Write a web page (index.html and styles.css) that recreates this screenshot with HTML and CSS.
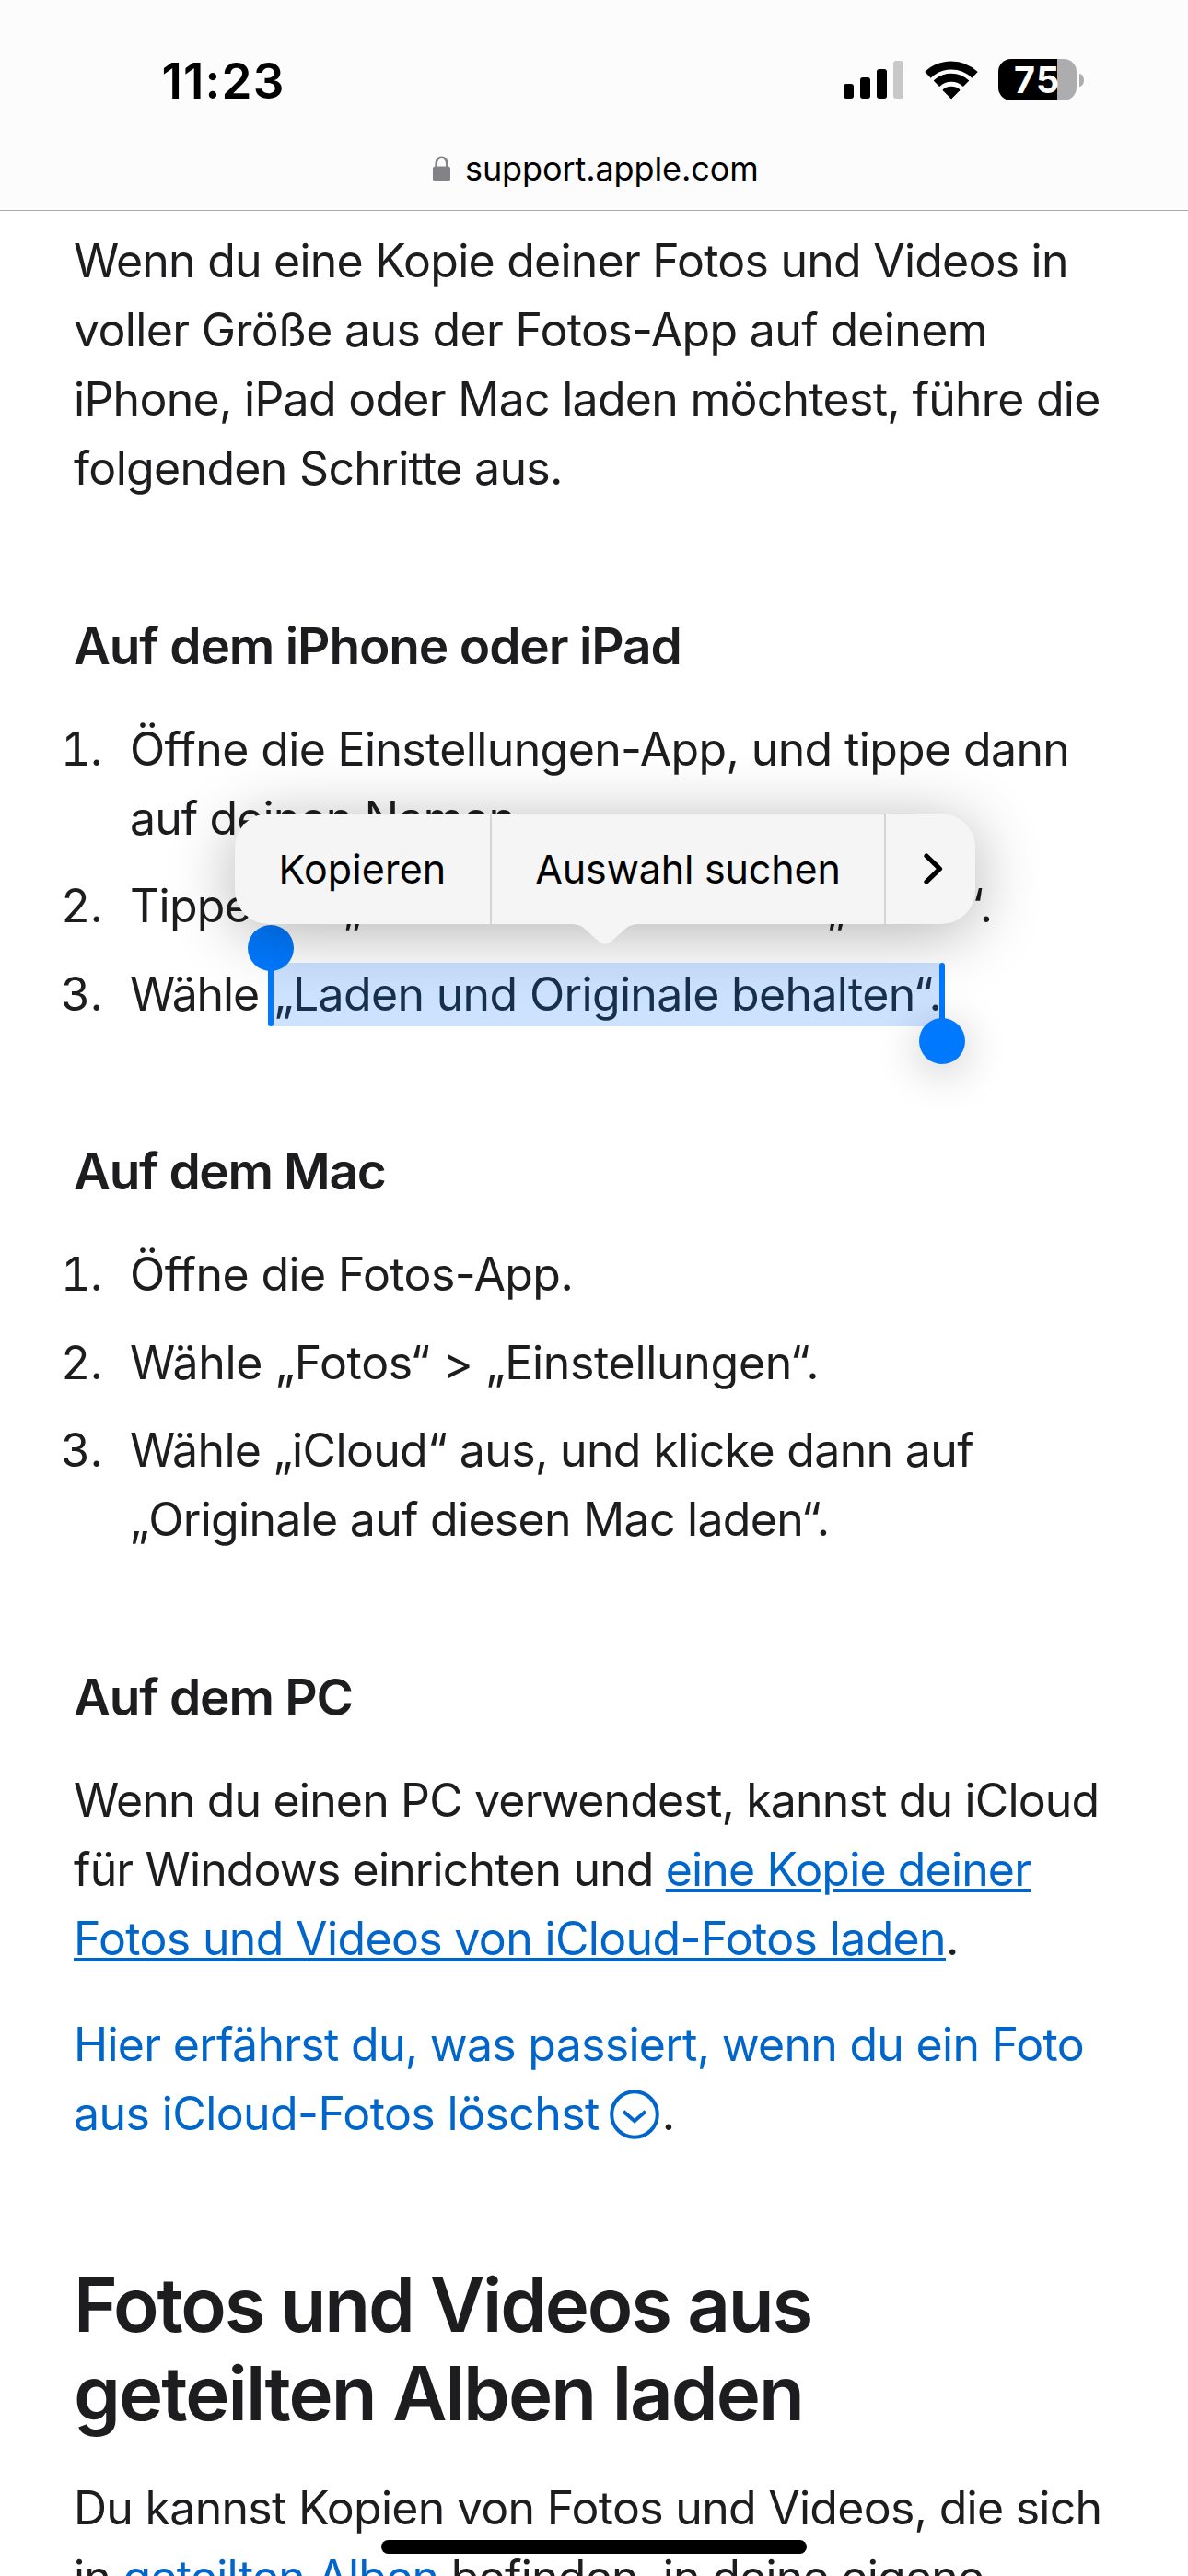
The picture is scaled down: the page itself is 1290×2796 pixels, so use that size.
FILE: index.html
```html
<!DOCTYPE html>
<html lang="de">
<head>
<meta charset="utf-8">
<title>support.apple.com</title>
<link rel="stylesheet" href="styles.css">
</head>
<body>
<header class="top">
  <div class="status">
    <span class="time">11:23</span>
    <div class="indicators">
      <svg class="signal" width="47" height="45" viewBox="0 0 47 45">
        <rect x="0" y="27" width="11" height="16" rx="3"/>
        <rect x="18" y="20" width="11" height="23" rx="3"/>
        <rect x="36" y="11" width="11" height="32" rx="3"/>
        <rect class="off" x="54" y="2" width="11" height="41" rx="3"/>
      </svg>
      <svg class="wifi" width="58" height="45" viewBox="0 0 58 45">
        <path class="arc" d="M3.5 17.4A36.5 36.5 0 0 1 54.5 17.4"/>
        <path class="arc" d="M12.9 26.8A23 23 0 0 1 45.1 26.8"/>
        <path d="M29 43.4 19.9 34.2Q19.4 33.6 20 33A14 14 0 0 1 38 33Q38.6 33.6 38.1 34.2Z"/>
      </svg>
      <div class="battery"><span class="level">75</span></div>
      <div class="nub"></div>
    </div>
  </div>
  <div class="address">
    <svg class="lock" width="19" height="28" viewBox="0 0 19 28">
      <rect x="0" y="11.5" width="19" height="16" rx="2.5"/>
      <path d="M3.7 13V8.2a5.8 6.5 0 0 1 11.6 0V13"/>
    </svg>
    <span>support.apple.com</span>
  </div>
</header>

<main class="article">
  <p class="lines intro">
    <span>Wenn du eine Kopie deiner Fotos und Videos in</span>
    <span>voller Größe aus der Fotos-App auf deinem</span>
    <span>iPhone, iPad oder Mac laden möchtest, führe die</span>
    <span>folgenden Schritte aus.</span>
  </p>

  <h3 class="h-iphone">Auf dem iPhone oder iPad</h3>
  <ol>
    <li><span class="num">1.</span><div class="lines open-settings"><span>Öffne die Einstellungen-App, und tippe dann</span><span>auf deinen Namen.</span></div></li>
    <li><span class="num">2.</span><div class="lines"><span>Tippe auf <span class="targets">„iCloud“ und dann auf „<span class="tight">Fotos</span>“.</span></span></div></li>
    <li><span class="num">3.</span><div class="lines"><span><span class="choose">Wähle</span> <span class="selected">„Laden und Originale behalten“.<i class="handle start"></i><i class="handle end"></i></span></span></div></li>
  </ol>

  <h3 class="h-mac">Auf dem Mac</h3>
  <ol>
    <li><span class="num">1.</span><div class="lines open-photos"><span>Öffne die Fotos-App.</span></div></li>
    <li><span class="num">2.</span><div class="lines choose-settings"><span>Wähle „Fotos“ &gt; „Einstellungen“.</span></div></li>
    <li><span class="num">3.</span><div class="lines choose-icloud"><span>Wähle „iCloud“ aus, und klicke dann auf</span><span>„Originale auf diesen Mac laden“.</span></div></li>
  </ol>

  <h3 class="h-pc">Auf dem PC</h3>
  <p class="lines pc">
    <span>Wenn du einen PC verwendest, kannst du iCloud</span>
    <span>für Windows einrichten und <a class="underlined" href="#">eine Kopie deiner</a></span>
    <span><a class="underlined" href="#">Fotos und Videos von iCloud-Fotos laden</a>.</span>
  </p>
  <p class="lines more">
    <span><a href="#">Hier erfährst du, was passiert, wenn du ein Foto</a></span>
    <span><a href="#">aus iCloud-Fotos löschst<svg class="down" width="54" height="54" viewBox="0 0 54 54"><circle cx="27" cy="27" r="24.8"/><path d="M15 23.7 27 34.2 39 23.7"/></svg></a>.</span>
  </p>

  <h2 class="lines"><span>Fotos und Videos aus</span><span>geteilten Alben laden</span></h2>
  <p class="lines shared">
    <span>Du kannst Kopien von Fotos und Videos, die sich</span>
    <span>in <a href="#">geteilten Alben</a> befinden, in deine eigene</span>
  </p>
</main>

<div class="menu">
  <button class="copy">Kopieren</button>
  <button class="search">Auswahl suchen</button>
  <button class="next" aria-label="Weiter"><svg width="24" height="36" viewBox="0 0 24 36"><path d="M4 4 18.5 18 4 32"/></svg></button>
  <svg class="arrow" width="76" height="23" viewBox="0 0 76 23"><path d="M0 0H76V1C67 1 63 3 58 8L44 20.5Q38 25 32 20.5L18 8C13 3 9 1 0 1Z"/></svg>
</div>
<div class="home"></div>
</body>
</html>
```
FILE: styles.css
```css
* { box-sizing: border-box; }

body {
  position: relative;
  width: 1290px;
  height: 2796px;
  margin: 0;
  overflow: hidden;
  background: #fff;
  color: #1d1d1f;
  font-family: Inter, "Liberation Sans", sans-serif;
}

svg { display: block; overflow: visible; }

/* Status bar and address */
.top {
  height: 229px;
  padding-top: 64px;
  background: #fcfcfc;
  border-bottom: 1px solid #a9a9ab;
  color: #000;
}

.status {
  display: flex;
  justify-content: space-between;
  align-items: flex-start;
  height: 48px;
  padding: 0 113px 0 175.5px;
}

.time {
  font-size: 53px;
  font-weight: 600;
  line-height: 48px;
  letter-spacing: 1.1px;
}

.indicators { display: flex; align-items: flex-start; }
.signal { margin-right: 41px; }
.signal .off { fill: #c8c8c8; }
.wifi { margin-right: 22px; }
.wifi .arc { fill: none; stroke: #000; stroke-width: 9.2; }

.battery {
  width: 85px;
  height: 45px;
  padding-left: 17px;
  border-radius: 14px;
  background: linear-gradient(to right, #000 64px, #adadaf 64px);
}

.level {
  display: block;
  color: #fff;
  font-size: 39.5px;
  font-weight: 700;
  line-height: 46px;
  letter-spacing: 1.5px;
}

.nub {
  width: 5px;
  height: 14px;
  margin: 16px 0 0 3px;
  border-radius: 0 5px 5px 0 / 0 7px 7px 0;
  background: #adadaf;
}

.address {
  display: flex;
  align-items: flex-start;
  gap: 16px;
  margin-top: 49px;
  padding-left: 470px;
  font-size: 36px;
  line-height: 44px;
  letter-spacing: -0.1px;
}

.lock { margin-top: 8px; fill: #828287; }
.lock path { fill: none; stroke: #828287; stroke-width: 2.6; }

/* Article */
.article { padding: 16.5px 60px 0 80px; }

.lines {
  margin: 0;
  font-size: 50px;
  line-height: 75px;
  letter-spacing: -0.72px;
}

.lines > span { display: block; white-space: nowrap; }

h3 {
  margin: 122.6px 0 41.8px;
  font-size: 55px;
  font-weight: 600;
  line-height: 66px;
  letter-spacing: -1.16px;
}

.h-mac { letter-spacing: -1.38px; }
.h-pc { letter-spacing: -1.23px; }

ol {
  display: flex;
  flex-direction: column;
  gap: 20.4px;
  margin: 0 0 -0.8px -14px;
  padding: 0;
  list-style: none;
}

li { display: flex; }

.num {
  width: 75px;
  font-size: 50px;
  line-height: 75px;
  letter-spacing: -0.5px;
  font-variant-numeric: tabular-nums;
}

.intro span:nth-child(1) { letter-spacing: -0.77px; }
.intro span:nth-child(2) { letter-spacing: -0.66px; }
.intro span:nth-child(4) { letter-spacing: -0.68px; }
.open-settings { letter-spacing: -0.64px; }
.open-settings span:nth-child(2) { letter-spacing: -0.9px; }
.targets { letter-spacing: -0.4px; }
.tight { margin-right: 5px; letter-spacing: -1.4px; }
.open-photos { letter-spacing: -0.6px; }
.choose-settings { letter-spacing: -0.3px; }
.choose-icloud span:nth-child(1) { letter-spacing: -0.66px; }
.pc span:nth-child(1) { letter-spacing: -0.84px; }
.pc span:nth-child(2) { letter-spacing: -0.86px; }
.pc span:nth-child(3) { letter-spacing: -0.65px; }
.more { margin-top: 40.8px; }
.more span:nth-child(2) { letter-spacing: -0.6px; }
.shared span:nth-child(2) { letter-spacing: -0.76px; }

a { color: #06c; text-decoration: none; }

.underlined {
  text-decoration: underline;
  text-decoration-thickness: 4px;
  text-underline-offset: 3px;
}

.down {
  display: inline-block;
  margin: 0 3px 0 11px;
  vertical-align: -10px;
  fill: none;
  stroke: #06c;
  stroke-width: 4;
}

h2.lines {
  margin: 121.5px 0 39px;
  font-size: 81.5px;
  line-height: 96px;
  letter-spacing: -2.2px;
}
h2 { font-weight: 600; }
h2 span:nth-child(2) { letter-spacing: -1.95px; }

/* Text selection */
.choose { margin-right: 3px; letter-spacing: -1.1px; }

.selected {
  position: relative;
  display: inline-block;
  color: #17304c;
  letter-spacing: -0.65px;
}

.selected::before {
  content: "";
  position: absolute;
  z-index: -1;
  top: 3px;
  left: -3px;
  width: 727px;
  height: 69px;
  background: #cce2ff;
}

.handle {
  position: absolute;
  width: 6px;
  height: 69px;
  top: 3px;
  border-radius: 3px;
  background: #0079ff;
}

.handle::after {
  content: "";
  position: absolute;
  left: -22px;
  width: 50px;
  height: 50px;
  border-radius: 50%;
  background: #0079ff;
}

.start { left: -6px; }
.start::after { top: -41px; }
.end { left: 723px; }
.end::after { top: 60px; box-shadow: 0 8px 48px rgba(0, 0, 0, 0.24); }

/* Selection menu */
.menu {
  position: absolute;
  top: 883px;
  left: 255px;
  display: flex;
  width: 804px;
  height: 120px;
  border-radius: 37px;
  background: #f5f5f5;
  box-shadow: 0 10px 70px rgba(0, 0, 0, 0.3);
}

.menu button {
  padding: 0;
  border: 0;
  background: none;
  color: #000;
  font: 43px/120px Inter, "Liberation Sans", sans-serif;
  text-align: center;
  white-space: nowrap;
}

.menu .copy { width: 279px; border-right: 2px solid #d5d5d5; letter-spacing: 0.14px; }
.menu .search { width: 428px; border-right: 2px solid #d5d5d5; letter-spacing: -0.17px; }
.menu .next { display: flex; flex: 1; align-items: center; padding-left: 39.5px; }
.next path { fill: none; stroke: #000; stroke-width: 5.2; stroke-linecap: round; stroke-linejoin: round; }

.arrow { position: absolute; top: 119px; left: 364px; fill: #f5f5f5; }

.home {
  position: absolute;
  left: 414px;
  bottom: 24px;
  width: 462px;
  height: 15px;
  border-radius: 8px;
  background: #000;
}
```
